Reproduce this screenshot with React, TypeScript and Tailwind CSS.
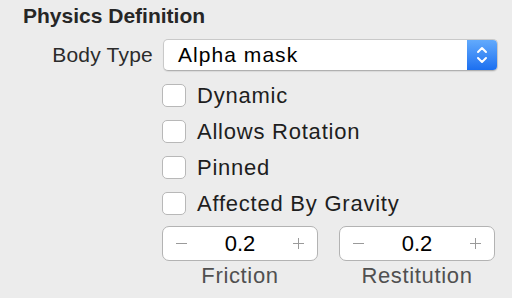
import React from "react";

const options = ["Dynamic", "Allows Rotation", "Pinned", "Affected By Gravity"];
const steppers = [
    { label: "Friction", value: "0.2" },
    { label: "Restitution", value: "0.2" },
];

function Chevrons() {
    return (
        <svg width="14" height="22" viewBox="0 0 14 22" fill="none" stroke="white" strokeWidth="2" strokeLinecap="round" strokeLinejoin="round">
            <path d="M3 8 L7 4 L11 8" />
            <path d="M3 14 L7 18 L11 14" />
        </svg>
    );
}

function Stepper({ label, value }: { label: string; value: string }) {
    return (
        <div className="flex flex-col items-center w-[156px]">
            <div className="flex items-center justify-between w-full h-[35px] px-[13px] bg-white border-[1.5px] border-[#b3b3b3] rounded-[7px]">
                <span className="block w-[11px] h-[1.5px] bg-[#9a9a9a]"></span>
                <span className="text-[22px] text-black">{value}</span>
                <span className="relative block w-[11px] h-[11px]">
                    <span className="absolute left-0 top-[4.75px] w-[11px] h-[1.5px] bg-[#9a9a9a]"></span>
                    <span className="absolute top-0 left-[4.75px] w-[1.5px] h-[11px] bg-[#9a9a9a]"></span>
                </span>
            </div>
            <span className="mt-[2px] text-[22px] leading-[26px] text-[#505050] tracking-[0.03em]">{label}</span>
        </div>
    );
}

export default function App() {
    return (
        <div
            className="w-[512px] h-[298px] bg-[#ececec] overflow-hidden"
            style={{ fontFamily: '"Liberation Sans", Arial, sans-serif' }}
        >
            <div className="pt-[4px] pl-[23px]">
                <h3 className="text-[21px] leading-[24px] font-bold text-[#262626]">Physics Definition</h3>
            </div>
            <div className="flex items-center mt-[11px]">
                <span className="w-[153px] text-right text-[21px] text-[#2b2b2b] tracking-[0.01em]">Body Type</span>
                <div className="ml-[10px] flex w-[335px] h-[32px] bg-white border border-[#c9c9c9] border-b-[#b0b0b0] rounded-[5px] overflow-hidden shadow-[0_1px_1px_rgba(0,0,0,0.08)]">
                    <span className="flex-1 flex items-center pl-[14px] text-[21px] text-black tracking-[0.05em]">Alpha mask</span>
                    <div className="w-[30px] flex items-center justify-center bg-gradient-to-b from-[#62aafc] to-[#1b6ff0]">
                        <Chevrons />
                    </div>
                </div>
            </div>
            <div className="mt-[6px] pl-[162px] flex flex-col">
                {options.map((opt) => (
                    <label key={opt} className="flex items-center h-[36px]">
                        <span className="block w-[24px] h-[23px] bg-white border border-[#b8b8b8] rounded-[5px]"></span>
                        <span className="ml-[11px] text-[22px] text-[#1e1e1e] tracking-[0.035em]">{opt}</span>
                    </label>
                ))}
            </div>
            <div className="mt-[5px] pl-[162px] flex gap-[21px]">
                {steppers.map((s) => (
                    <Stepper key={s.label} label={s.label} value={s.value} />
                ))}
            </div>
        </div>
    );
}
